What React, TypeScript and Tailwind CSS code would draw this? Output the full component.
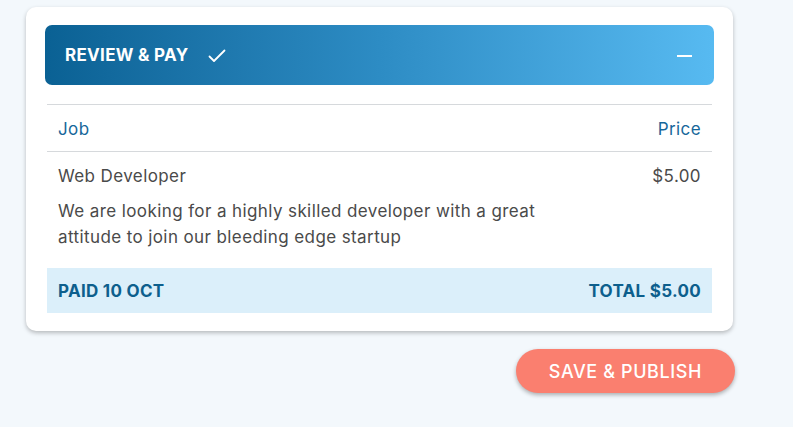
import React from "react";

export default function App() {
  return (
    <div className="min-h-[427px] w-[793px] bg-[#f3f8fc] pt-[7px] pl-[26px]" style={{ fontFamily: "Inter, 'Noto Sans', sans-serif" }}>
      <div className="w-[707px] rounded-[10px] bg-white px-[19px] pt-[18px] pb-[18px] shadow-[0_2px_4px_rgba(0,0,0,0.25)]">
        <div className="flex h-[60px] items-center justify-between rounded-[7px] bg-gradient-to-r from-[#0a6194] via-[#2d8cc4] to-[#57baf1] pl-[20px] pr-[22px] pt-[2px]">
          <div className="flex items-center">
            <span className="text-[17px] font-bold tracking-[0.3px] text-white">REVIEW &amp; PAY</span>
            <svg className="ml-[20px]" width="18" height="14" viewBox="0 0 18 14" fill="none">
              <path d="M1.5 7.5 L6 12 L16.5 1.5" stroke="white" strokeWidth="1.8" strokeLinecap="round" strokeLinejoin="round" />
            </svg>
          </div>
          <div className="h-[2px] w-[15px] bg-white" />
        </div>
        <div className="mx-[2px] mt-[19px]">
          <div className="flex h-[48px] items-center justify-between border-y border-[#d6d9dc] px-[11px] pt-[3px] text-[17px] tracking-[0.4px] text-[#17679a]">
            <span>Job</span>
            <span>Price</span>
          </div>
          <div className="px-[11px] pt-[12px] pb-[18px] text-[17px] tracking-[0.4px] text-[#4a4a4a]">
            <div className="flex justify-between leading-[24px]">
              <span>Web Developer</span>
              <span>$5.00</span>
            </div>
            <p className="mt-[10px] w-[490px] leading-[26px]">
              We are looking for a highly skilled developer with a great attitude to join our bleeding edge startup
            </p>
          </div>
          <div className="flex h-[45px] items-center justify-between bg-[#dbeffa] px-[11px] pt-[2px] text-[17px] font-bold tracking-[0.3px] text-[#0d5f8d]">
            <span>PAID 10 OCT</span>
            <span>TOTAL $5.00</span>
          </div>
        </div>
      </div>
      <div className="mt-[18px] flex w-[709px] justify-end">
        <button className="flex h-[44px] items-center rounded-full bg-[#fa7f6f] px-[33px] text-[18px] font-medium tracking-[0.6px] text-white shadow-[0_2px_4px_rgba(0,0,0,0.3)]">
          SAVE &amp; PUBLISH
        </button>
      </div>
    </div>
  );
}
